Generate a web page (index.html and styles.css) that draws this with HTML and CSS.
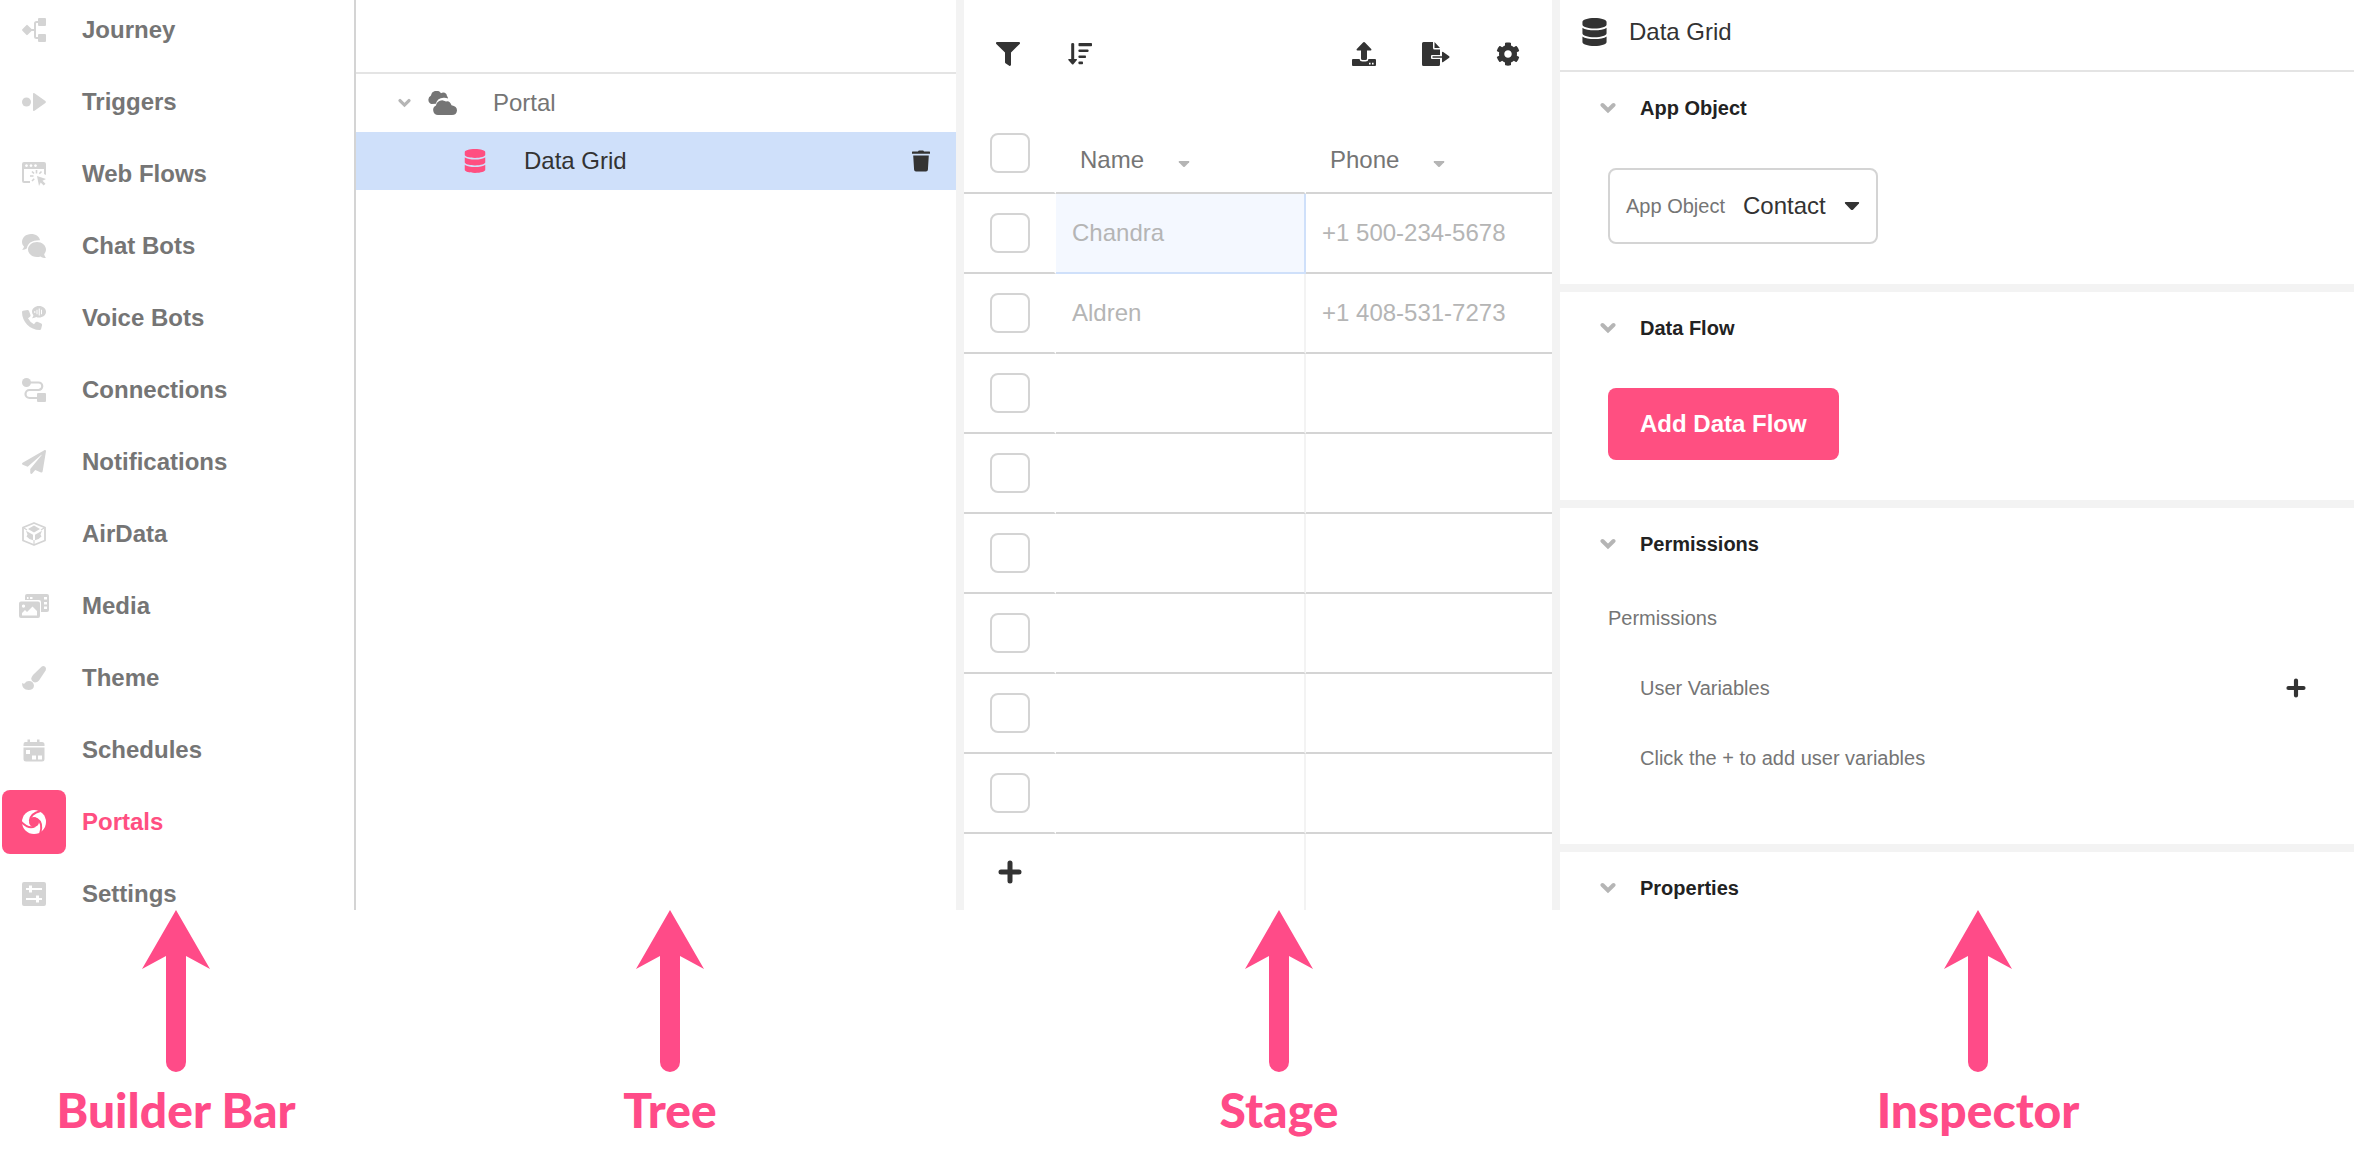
FILE: index.html
```html
<!DOCTYPE html>
<html lang="en">
<head>
    <meta charset="UTF-8">
    <meta name="viewport" content="width=device-width, initial-scale=1.0">
    <title>Portal Builder</title>
    <link rel="stylesheet" href="styles.css">
</head>
<body>
    <!-- shared icons -->
    <svg class="sprite" aria-hidden="true">
        <symbol id="database" viewBox="0 0 448 512">
            <path d="M448 73.143v45.714C448 159.143 347.667 192 224 192S0 159.143 0 118.857V73.143C0 32.857 100.333 0 224 0s224 32.857 224 73.143zM448 176v102.857C448 319.143 347.667 352 224 352S0 319.143 0 278.857V176c48.125 33.143 136.208 48.572 224 48.572S399.874 209.143 448 176zm0 160v102.857C448 479.143 347.667 512 224 512S0 479.143 0 438.857V336c48.125 33.143 136.208 48.572 224 48.572S399.874 369.143 448 336z"/>
        </symbol>
        <symbol id="chevron" viewBox="0 0 16 12">
            <path d="M2.500 3L8 8.500 13.500 3" fill="none" stroke="currentColor" stroke-width="4" stroke-linecap="round"/>
        </symbol>
        <symbol id="caret" viewBox="0 0 16 10">
            <path d="M1.500 1h13q1.200 .4 .4 1.500L9 8.700q-1 .8-2 0L1.100 2.500Q.3 1.400 1.500 1z"/>
        </symbol>
        <symbol id="plus" viewBox="0 0 24 24">
            <path d="M12 3v18M3 12h18" fill="none" stroke="currentColor" stroke-width="5" stroke-linecap="round"/>
        </symbol>
        <symbol id="arrow" viewBox="0 0 68 164">
            <path d="M34 0l34 59-24-13v106a10 10 0 0 1-20 0V46L0 59z"/>
        </symbol>
    </svg>

    <main class="app">
        <nav class="builder-bar">
            <a href="#" class="nav-item">
                <span class="nav-icon"><svg class="icon" viewBox="0 0 24 24"><path d="M5.700 7.200l4.100 4.100q.7.700 0 1.400l-4.100 4.100q-.7.700-1.400 0L.4 12.700q-.7-.7 0-1.400l3.900-4.100q.7-.7 1.400 0z"/><rect x="16" width="8" height="8" rx="1"/><rect x="16" y="16" width="8" height="8" rx="1"/><path d="M9 12h4M17 4h-2.500Q13 4 13 5.500v13q0 1.500 1.500 1.500H17" fill="none" stroke="currentColor" stroke-width="2"/></svg></span>
                Journey
            </a>
            <a href="#" class="nav-item">
                <span class="nav-icon"><svg class="icon" viewBox="0 0 24 24"><circle cx="4.500" cy="12" r="4.500"/><path d="M11 4q0-1.600 1.500-.7L23.400 11q1 1 0 2l-10.900 7.700Q11 21.600 11 20z"/></svg></span>
                Triggers
            </a>
            <a href="#" class="nav-item">
                <span class="nav-icon"><svg class="icon" viewBox="0 0 24 24"><path fill-rule="evenodd" d="M2 0h20q2 0 2 2v11l-2-1V7H2v12h6v2H2q-2 0-2-2V2Q0 0 2 0zM4.500 2.200a1.400 1.400 0 1 0 .01 0zM9 2.200a1.400 1.400 0 1 0 .01 0zM13.500 2.200a1.400 1.400 0 1 0 .01 0z"/><path d="M15 14l9 3-3.500 1.700 3 3-1.800 1.800-3-3L17 24z"/><path d="M14.500 8v3.500M10 9.500l2 2M8 14h3.500M10 19l2.200-2.200M19.500 9.500l-2.200 2.200" fill="none" stroke="currentColor" stroke-width="1.600"/></svg></span>
                Web Flows
            </a>
            <a href="#" class="nav-item">
                <span class="nav-icon"><svg class="icon" viewBox="0 0 24 24"><path d="M9 0C14 0 17.500 2.700 18 6.300 11 6 5.300 9 5 14.300 3.500 15.600 1.800 16 0 16c1-1 1.800-2 2-3.400C.7 11.300 0 9.700 0 8 0 3.600 4 0 9 0z"/><path d="M15 8c5 0 9 3.400 9 7.600 0 1.800-.7 3.300-1.800 4.600.2 1.500 1 2.800 1.800 3.800-2 0-4-.6-5.500-1.600-1 .4-2.200.6-3.500.6-5 0-9-3.300-9-7.400S10 8 15 8z"/></svg></span>
                Chat Bots
            </a>
            <a href="#" class="nav-item">
                <span class="nav-icon"><svg class="icon" viewBox="0 0 24 24"><path d="M1 4.800L5.500 4q1-.1 1.500 1l1.500 4q.3 1-.5 1.700l-2 1.500q2 4 6 6l1.600-2q.7-.7 1.700-.4l4 1.700q1 .5.800 1.500l-1 4q-.3 1-1.300 1C8 24 0 16 0 6q0-1 1-1.200z"/><path fill-rule="evenodd" d="M17 0c4 0 7 2.500 7 5.800s-3 5.800-7 5.800q-1.500 0-2.800-.5Q12.500 12.300 10 12.200q1.300-1.300 1.400-3Q10 7.700 10 5.800C10 2.500 13 0 17 0zM12.300 5h1v2h-1zM14.500 3.700h1v4.600h-1zM16.700 2.500h1.100v7h-1.100zM19 3.700h1v4.600h-1z"/></svg></span>
                Voice Bots
            </a>
            <a href="#" class="nav-item">
                <span class="nav-icon"><svg class="icon" viewBox="0 0 24 24"><circle cx="4.500" cy="4.500" r="4.500"/><rect x="15" y="15" width="9" height="9" rx="1"/><path d="M8 4.500h8.500a3.750 3.750 0 0 1 0 7.500h-9a4 4 0 0 0 0 8H16" fill="none" stroke="currentColor" stroke-width="2.200"/></svg></span>
                Connections
            </a>
            <a href="#" class="nav-item">
                <span class="nav-icon"><svg class="icon" viewBox="0 0 512 512"><path d="M476 3.200L12.500 270.600c-18.100 10.400-15.800 35.600 2.200 43.200L121 358.400l287.300-253.200c5.500-4.900 13.300 2.600 8.600 8.300L176 407v80.500c0 23.600 28.500 32.900 42.500 15.800L282 426l124.600 52.200c14.200 6 30.400-2.900 33-18.200l72-432C515 7.800 493.300-6.800 476 3.200z"/></svg></span>
                Notifications
            </a>
            <a href="#" class="nav-item">
                <span class="nav-icon"><svg class="icon" viewBox="0 0 24 24"><path d="M12 1L23 5.500v13L12 23 1 18.500v-13z" fill="none" stroke="currentColor" stroke-width="1.800" stroke-linejoin="round"/><path d="M12 3.500L18 7l-6 3.500L6 7z"/><path d="M4 8.800l7 4v5.500L7.500 17 4.500 14.500l1-2zM20 8.800l-7 4v5.500l3.500-1.300 3-2.500-1-2z"/><path d="M12 18v5M2 6l3 2M22 6l-3 2" fill="none" stroke="currentColor" stroke-width="1.200"/></svg></span>
                AirData
            </a>
            <a href="#" class="nav-item">
                <span class="nav-icon"><svg class="icon wide" viewBox="0 0 30 24"><path fill-rule="evenodd" d="M8 0h20q2 0 2 2v14q0 2-2 2h-6V8q0-2-2-2H6V2q0-2 2-2zM11 3h2.500v2H11zM8 3h1.500v2H8zM25 3h3v2.500h-3zM25 8h3v2.500h-3zM25 12.500h3V15h-3z"/><path fill-rule="evenodd" d="M2 7.500h17q2 0 2 2V22q0 2-2 2H2q-2 0-2-2V9.500q0-2 2-2zM4.500 10.500a1.600 1.600 0 1 0 .01 0zM3 21.500h15v-4.500L13.500 12.500 8 18l-2-2-3 3z"/></svg></span>
                Media
            </a>
            <a href="#" class="nav-item">
                <span class="nav-icon"><svg class="icon" viewBox="0 0 24 24"><path d="M19.500.7q1.800-1.300 3.600.1 1.500 1.500.5 3.700L17 14.500q-1.800 2-4 2Q9.500 15.500 9.300 12.500q0-1.500 1.700-3.500z"/><path d="M7 15q4.500.2 5 4.700Q11.500 24 6.500 24 0 24 0 17q2.300 1.500 3 0 1-2 4-2z"/></svg></span>
                Theme
            </a>
            <a href="#" class="nav-item">
                <span class="nav-icon"><svg class="icon" viewBox="0 0 24 24"><path d="M3 4h2.500V1.500h2.500V4h7V1.500h2.500V4H20q2.500 0 2.500 2.500V8h-21V6.500Q1.500 4 3 4z"/><path fill-rule="evenodd" d="M1.500 9.500h21V21q0 2.500-2.500 2.500H4q-2.500 0-2.500-2.500zM4 12h4v4H4zM10 17.500h4v4h-4zM16 17.500h4v4h-4z"/></svg></span>
                Schedules
            </a>
            <a href="#" class="nav-item active">
                <span class="nav-icon"><svg class="icon" viewBox="0 0 24 24"><circle cx="12" cy="12" r="12"/><circle class="hole" cx="12" cy="12" r="5"/><g class="slits"><path d="M7.800 11C8 6.500 11 2.800 18.500 1"/><path d="M7.800 11C8 6.500 11 2.800 18.500 1" transform="rotate(120 12 12)"/><path d="M7.800 11C8 6.500 11 2.800 18.500 1" transform="rotate(240 12 12)"/></g></svg></span>
                Portals
            </a>
            <a href="#" class="nav-item">
                <span class="nav-icon"><svg class="icon" viewBox="0 0 24 24"><path fill-rule="evenodd" d="M2 0h20q2 0 2 2v20q0 2-2 2H2q-2 0-2-2V2q0-2 2-2zM4 6v2h3v2.500h3V8h10V6H10V3.500H7V6zM4 16v2h10v2.500h3V18h3v-2h-3v-2.500h-3V16z"/></svg></span>
                Settings
            </a>
        </nav>

        <section class="tree">
            <div class="tree-header"></div>
            <div class="tree-row">
                <svg class="tree-toggle" viewBox="0 0 16 12"><use href="#chevron"/></svg>
                <svg class="cloud-icon" viewBox="0 0 30 24"><path d="M4.500 13A4.600 4.600 0 0 1 4 4.500 5.500 5.500 0 0 1 14 2.200 3.800 3.800 0 0 1 20 5q1 1 1 2.500-2-1-4.500-.8-6 .2-7.700 6.100z"/><path d="M11 24a5 5 0 0 1-2-9.500A6.300 6.300 0 0 1 19 10.600q3.500-1.500 5.500 3.600Q30 15 30 19.500 29.500 24 25 24z"/></svg>
                <span>Portal</span>
            </div>
            <div class="tree-row selected">
                <svg class="grid-icon" viewBox="0 0 448 512"><use href="#database"/></svg>
                <span>Data Grid</span>
                <button class="icon-button trash" aria-label="Delete Data Grid">
                    <svg viewBox="0 0 18 21"><path d="M0 1.500q0-.5.500-.5H6q.5-1 1-1h4q.5 0 1 1h5.500q.5 0 .5.500V3.300H0zM1.200 5h15.600l-.9 14.300Q15.800 21 14 21H4q-1.800 0-1.900-1.700z"/></svg>
                </button>
            </div>
        </section>

        <section class="stage">
            <div class="toolbar">
                <button class="icon-button" aria-label="Filter"><svg class="icon" viewBox="0 0 512 512"><path d="M487.976 0H24.028C2.710 0-8.047 25.866 7.058 40.971L192 225.941V432c0 7.831 3.821 15.170 10.237 19.662l80 55.980C298.020 518.690 320 507.493 320 487.980V225.941l184.947-184.970C520.021 25.896 509.338 0 487.976 0z"/></svg></button>
                <button class="icon-button" aria-label="Sort"><svg class="icon" viewBox="0 0 24 24"><path d="M3.200 2q0-1 1.500-1t1.500 1v15h2.300q.9.300.2 1.200l-3.300 4q-.7.700-1.400 0l-3.500-4q-.7-.9.300-1.200h2.400z"/><rect x="10.500" y="1" width="13.500" height="3.200" rx=".8"/><rect x="10.500" y="7.500" width="10" height="2.600" rx=".8"/><rect x="10.500" y="13.500" width="7.500" height="2.600" rx=".8"/><rect x="10.500" y="19.500" width="4.500" height="2.800" rx=".8"/></svg></button>
                <button class="icon-button push" aria-label="Import"><svg class="icon" viewBox="0 0 24 24"><path d="M12 0q.7 0 1.200.7l6 6.300q.9 1.200-.5 1.500H15v8q0 1.500-1.500 1.500h-3Q9 18 9 16.500v-8H5.300q-1.400-.3-.5-1.500l6-6.300Q11.300 0 12 0z"/><path fill-rule="evenodd" d="M1 17h6.500q.3 2.500 3 2.500h3q2.700 0 3-2.500H23q1 0 1 1v5q0 1-1 1H1q-1 0-1-1v-5q0-1 1-1zM17 20.800h1.600v1.600H17zM20 20.800h1.600v1.600H20z"/></svg></button>
                <button class="icon-button" aria-label="Export"><svg class="icon export" viewBox="0 0 28 24"><path d="M1.500 0H11v6q0 1.500 1.500 1.500H18v5.500H10q-1 0-1 1v2q0 1 1 1h8v5.500q0 1.500-1.500 1.500h-15Q0 24 0 22.500v-21Q0 0 1.500 0zM12.500 0l5.500 6h-5.500z"/><path d="M10.500 14.300H20v-4q.3-1 1.200-.3l6 4.300q.7.700 0 1.400l-6 4.300q-.9.700-1.200-.3v-4h-9.500z"/></svg></button>
                <button class="icon-button" aria-label="Grid settings"><svg class="icon" viewBox="0 0 512 512"><path d="M487.400 315.700l-42.600-24.600c4.300-23.200 4.300-47 0-70.200l42.600-24.600c4.900-2.800 7.100-8.600 5.500-14-11.100-35.600-30-67.800-54.700-94.600-3.800-4.100-10-5.100-14.800-2.300L380.800 110c-17.900-15.400-38.500-27.300-60.800-35.100V25.800c0-5.600-3.900-10.500-9.400-11.700-36.700-8.200-74.300-7.800-109.200 0-5.500 1.200-9.400 6.100-9.400 11.700V75c-22.200 7.900-42.800 19.800-60.800 35.100L88.700 85.500c-4.900-2.800-11-1.900-14.800 2.300-24.700 26.700-43.600 58.900-54.700 94.600-1.700 5.400.6 11.200 5.500 14L67.300 221c-4.300 23.200-4.300 47 0 70.200l-42.600 24.600c-4.900 2.800-7.100 8.600-5.500 14 11.100 35.600 30 67.800 54.700 94.600 3.800 4.100 10 5.100 14.800 2.300l42.600-24.600c17.900 15.400 38.500 27.300 60.800 35.100v49.200c0 5.600 3.900 10.500 9.400 11.700 36.700 8.200 74.300 7.800 109.200 0 5.500-1.200 9.400-6.100 9.400-11.700v-49.200c22.200-7.900 42.800-19.800 60.800-35.100l42.600 24.600c4.900 2.800 11 1.900 14.800-2.300 24.700-26.700 43.600-58.900 54.700-94.600 1.500-5.500-.7-11.300-5.600-14.100zM256 336c-44.100 0-80-35.900-80-80s35.900-80 80-80 80 35.900 80 80-35.900 80-80 80z"/></svg></button>
            </div>
            <table class="grid">
                <thead>
                    <tr>
                        <th class="check"><input type="checkbox" aria-label="Select all"></th>
                        <th class="name"><div class="heading">Name<button class="icon-button" aria-label="Name menu"><svg class="menu-caret" viewBox="0 0 16 10"><use href="#caret"/></svg></button></div></th>
                        <th><div class="heading">Phone<button class="icon-button" aria-label="Phone menu"><svg class="menu-caret" viewBox="0 0 16 10"><use href="#caret"/></svg></button></div></th>
                    </tr>
                </thead>
                <tbody>
                    <tr>
                        <td class="check"><input type="checkbox" aria-label="Select Chandra"></td>
                        <td class="name focused">Chandra</td>
                        <td>+1 500-234-5678</td>
                    </tr>
                    <tr>
                        <td class="check"><input type="checkbox" aria-label="Select Aldren"></td>
                        <td class="name">Aldren</td>
                        <td>+1 408-531-7273</td>
                    </tr>
                    <tr><td class="check"><input type="checkbox" aria-label="Select row 3"></td><td class="name"></td><td></td></tr>
                    <tr><td class="check"><input type="checkbox" aria-label="Select row 4"></td><td class="name"></td><td></td></tr>
                    <tr><td class="check"><input type="checkbox" aria-label="Select row 5"></td><td class="name"></td><td></td></tr>
                    <tr><td class="check"><input type="checkbox" aria-label="Select row 6"></td><td class="name"></td><td></td></tr>
                    <tr><td class="check"><input type="checkbox" aria-label="Select row 7"></td><td class="name"></td><td></td></tr>
                    <tr><td class="check"><input type="checkbox" aria-label="Select row 8"></td><td class="name"></td><td></td></tr>
                    <tr class="add-row">
                        <td class="check"><button class="icon-button" aria-label="Add row"><svg class="icon" viewBox="0 0 24 24"><use href="#plus"/></svg></button></td>
                        <td class="name"></td>
                        <td></td>
                    </tr>
                </tbody>
            </table>
        </section>

        <aside class="inspector">
            <header class="inspector-header">
                <svg viewBox="0 0 448 512"><use href="#database"/></svg>
                Data Grid
            </header>
            <section class="panel">
                <h2><svg viewBox="0 0 16 12"><use href="#chevron"/></svg>App Object</h2>
                <div class="panel-body">
                    <div class="select-box">
                        <label for="appObject">App Object</label>
                        <select id="appObject">
                            <option>Contact</option>
                        </select>
                        <svg viewBox="0 0 16 10"><use href="#caret"/></svg>
                    </div>
                </div>
            </section>
            <section class="panel">
                <h2><svg viewBox="0 0 16 12"><use href="#chevron"/></svg>Data Flow</h2>
                <div class="panel-body">
                    <button class="primary">Add Data Flow</button>
                </div>
            </section>
            <section class="panel">
                <h2><svg viewBox="0 0 16 12"><use href="#chevron"/></svg>Permissions</h2>
                <div class="panel-body permissions">
                    <p>Permissions</p>
                    <div class="variables">
                        <span>User Variables</span>
                        <button class="icon-button" aria-label="Add user variable"><svg class="small-plus" viewBox="0 0 24 24"><use href="#plus"/></svg></button>
                    </div>
                    <p class="hint">Click the + to add user variables</p>
                </div>
            </section>
            <section class="panel">
                <h2><svg viewBox="0 0 16 12"><use href="#chevron"/></svg>Properties</h2>
            </section>
        </aside>
    </main>

    <footer class="callouts">
        <div class="callout"><svg viewBox="0 0 68 164"><use href="#arrow"/></svg>Builder Bar</div>
        <div class="callout"><svg viewBox="0 0 68 164"><use href="#arrow"/></svg>Tree</div>
        <div class="callout"><svg viewBox="0 0 68 164"><use href="#arrow"/></svg>Stage</div>
        <div class="callout last"><svg viewBox="0 0 68 164"><use href="#arrow"/></svg>Inspector</div>
    </footer>
</body>
</html>
```
FILE: styles.css
```css
:root {
    --pink: #ff4f81;
    --callout: #ff4b88;
    --dark: #333333;
    --text: #757575;
    --muted: #b5b5b5;
    --border: #d4d4d4;
    --line: #e4e4e4;
    --gutter: #f3f3f3;
    --selected: #cfe0fa;
    --white: #ffffff;
}

* {
    margin: 0;
    padding: 0;
    box-sizing: border-box;
}

body {
    background: var(--white);
    color: var(--text);
    font-family: "Liberation Sans", Arial, sans-serif;
    font-size: 24px;
    line-height: 28px;
}

svg {
    display: block;
    flex-shrink: 0;
    fill: currentColor;
}

.sprite {
    position: absolute;
    width: 0;
    height: 0;
}

.icon {
    width: 24px;
    height: 24px;
}

.icon-button {
    display: block;
    border: none;
    background: none;
    color: inherit;
    cursor: pointer;
}

.app {
    display: grid;
    grid-template-columns: 356px minmax(0, 608fr) minmax(0, 596fr) minmax(0, 794fr);
}

/* Builder bar */
.builder-bar {
    display: flex;
    flex-direction: column;
    gap: 40px;
    padding-top: 14px;
    border-right: 2px solid var(--border);
}

.nav-item {
    display: flex;
    align-items: center;
    gap: 16px;
    height: 32px;
    padding-left: 2px;
    color: var(--text);
    font-weight: 700;
    text-decoration: none;
}

.nav-icon {
    display: flex;
    flex-shrink: 0;
    align-items: center;
    justify-content: center;
    width: 64px;
    height: 64px;
    border-radius: 8px;
    color: var(--border);
}

.nav-icon .wide {
    width: 30px;
}

.nav-item.active {
    color: var(--pink);
}

.nav-item.active .nav-icon {
    background: var(--pink);
    color: var(--white);
}

.hole {
    fill: var(--pink);
}

.slits {
    fill: none;
    stroke: var(--pink);
    stroke-width: 2px;
}

/* Tree */
.tree {
    border-right: 8px solid var(--gutter);
}

.tree-header {
    height: 74px;
    border-bottom: 2px solid var(--line);
}

.tree-row {
    display: flex;
    align-items: center;
    height: 58px;
    padding-left: 42px;
}

.tree-toggle {
    width: 13px;
    height: 10px;
    margin-right: 16px;
    color: var(--muted);
}

.cloud-icon {
    width: 30px;
    height: 24px;
    margin-right: 36px;
}

.tree-row.selected {
    padding: 0 26px 0 108px;
    background: var(--selected);
    color: var(--dark);
}

.grid-icon {
    width: 22px;
    height: 24px;
    margin-right: 38px;
    color: var(--pink);
}

.trash {
    margin-left: auto;
}

.trash svg {
    width: 18px;
    height: 22px;
}

/* Stage */
.stage {
    border-right: 8px solid var(--gutter);
}

.toolbar {
    display: flex;
    gap: 48px;
    padding: 42px 32px 48px;
    color: var(--dark);
}

.toolbar .push {
    margin-left: auto;
}

.toolbar .export {
    width: 28px;
    margin: 0 -2px;
}

.grid {
    width: 100%;
    border-spacing: 0;
    table-layout: fixed;
}

.grid th,
.grid td {
    height: 80px;
    padding-left: 16px;
    border-bottom: 2px solid var(--border);
    font-weight: 400;
    text-align: left;
    vertical-align: middle;
}

.grid td {
    color: var(--muted);
}

.grid th {
    padding-left: 24px;
}

.grid .check {
    width: 92px;
    padding-left: 26px;
    border-right: 2px solid var(--white);
}

.grid .name {
    width: 250px;
    border-right: 2px solid var(--gutter);
}

.grid th.name {
    border-right-color: var(--white);
}

.grid .focused {
    background: #f4f8ff;
    border-color: var(--selected);
}

.grid input {
    display: block;
    appearance: none;
    width: 40px;
    height: 40px;
    border: 2px solid var(--border);
    border-radius: 8px;
    background: var(--white);
}

.heading {
    display: flex;
    align-items: center;
    gap: 34px;
    padding-top: 14px;
}

.menu-caret {
    width: 12px;
    height: 8px;
    margin-top: 8px;
    color: var(--muted);
}

.grid .add-row td {
    height: 76px;
    border-bottom: none;
}

.add-row .icon-button {
    margin-left: 8px;
    color: var(--dark);
}

/* Inspector */
.inspector {
    font-size: 20px;
}

.inspector-header {
    display: flex;
    align-items: center;
    gap: 22px;
    height: 72px;
    padding: 0 22px 6px;
    border-bottom: 2px solid var(--line);
    color: var(--dark);
    font-size: 24px;
}

.inspector-header svg {
    width: 25px;
    height: 28px;
}

.panel + .panel {
    border-top: 8px solid var(--gutter);
}

.panel h2 {
    display: flex;
    align-items: center;
    gap: 24px;
    padding: 22px 40px 8px;
    color: #222222;
    font-size: 20px;
    font-weight: 700;
}

.panel h2 svg {
    width: 16px;
    height: 12px;
    color: var(--muted);
}

.panel-body {
    padding: 38px 48px 40px;
}

.select-box {
    display: flex;
    align-items: center;
    gap: 18px;
    width: fit-content;
    height: 76px;
    padding: 0 16px;
    border: 2px solid var(--border);
    border-radius: 8px;
}

.select-box select {
    appearance: none;
    border: none;
    background: none;
    color: var(--dark);
    font: inherit;
    font-size: 24px;
}

.select-box svg {
    width: 16px;
    height: 10px;
    color: var(--dark);
}

.primary {
    display: block;
    height: 72px;
    padding: 0 32px;
    border: none;
    border-radius: 8px;
    background: var(--pink);
    color: var(--white);
    font: inherit;
    font-size: 24px;
    font-weight: 700;
    cursor: pointer;
}

.permissions {
    display: flex;
    flex-direction: column;
    gap: 42px;
    padding-bottom: 72px;
}

.variables {
    display: flex;
    align-items: center;
    justify-content: space-between;
    padding-left: 32px;
}

.variables .icon-button {
    color: var(--dark);
}

.small-plus {
    width: 20px;
    height: 20px;
}

.hint {
    padding-left: 32px;
}

/* Callouts under each panel */
.callouts {
    display: grid;
    grid-template-columns: 352fr 636fr 582fr 784fr;
    color: var(--callout);
    font-family: Lato, sans-serif;
    font-size: 48px;
    font-weight: 900;
    line-height: 64px;
}

.callout {
    display: flex;
    flex-direction: column;
    align-items: center;
    gap: 4px;
}

.callout svg {
    width: 68px;
    height: 164px;
}

.callout.last {
    padding-left: 32px;
}
```
